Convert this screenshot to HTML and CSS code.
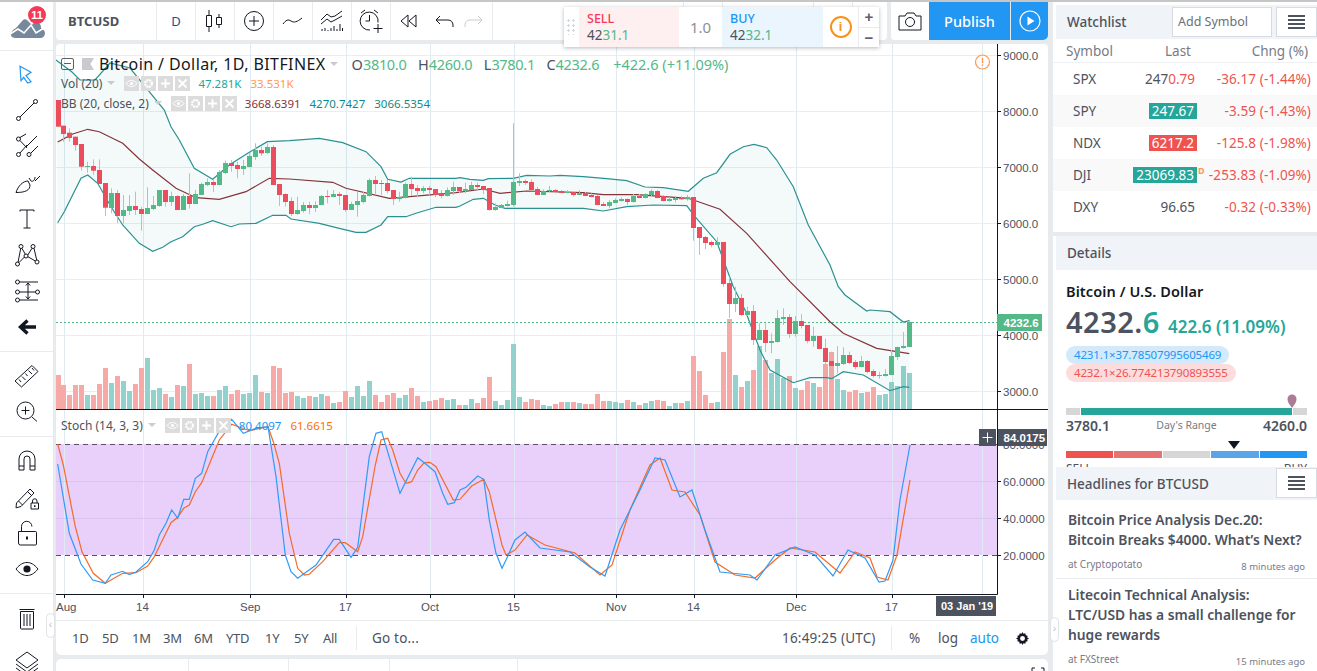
FILE: index.html
```html
<!DOCTYPE html>
<html lang="en">
<head>
<meta charset="utf-8">
<title>BTCUSD chart</title>
<link rel="stylesheet" href="styles.css">
</head>
<body>
<div class="app">
  <aside class="sidebar">
    <div class="logo">
      <svg class="logo-mark" width="36" height="26" viewBox="0 0 36 26"><path class="logo-cloud" d="M2 20c0-4 3-6 5-7l7-8c1-1 3-1 4 0l5 5c2-3 6-3 8-1 1 2 1 3 1 4 2 1 4 3 4 5 0 3-2 5-5 5H7c-3 0-5-1-5-3z"/><path class="logo-line" d="M1 19l8-5 6 4 7-8 5 8 8-5"/></svg>
      <span class="badge">11</span>
    </div>
    <div class="tools">
      <div class="tool"><svg viewBox="0 0 28 28"><path class="i-blue" d="M7 5.300L18 11.300L13 14.700L18 20.700L14.700 22L10.700 16.300L8 19.700Z"/></svg></div>
      <div class="tool"><svg viewBox="0 0 28 28"><circle class="i" cx="5.500" cy="21.500" r="2"/><circle class="i" cx="22.500" cy="4.500" r="2"/><path class="i" d="M7 20L21 6"/></svg></div>
      <div class="tool"><svg viewBox="0 0 28 28"><circle class="i" cx="5.500" cy="6" r="2"/><circle class="i" cx="5.500" cy="21.500" r="2"/><circle class="i" cx="16" cy="21.500" r="2"/><path class="i" d="M7 4.500L13 1M7 7.500L14 15M14 12L7 20M13 14L24 3M18 20L25 13"/></svg></div>
      <div class="tool"><svg viewBox="0 0 28 28"><path class="i" d="M3 23.500C5 17 10 12 15 12L17 16C17 21 13 23.500 3 23.500ZM16 9L18 12C20 13 22 11 22 8M22 12L27 7"/></svg></div>
      <div class="tool"><svg viewBox="0 0 28 28"><path class="i" d="M7 6.500V5h14v1.500M14 5v18M10.500 23h7"/></svg></div>
      <div class="tool"><svg viewBox="0 0 28 28"><circle class="i" cx="4.500" cy="23" r="2"/><circle class="i" cx="8" cy="5.500" r="2"/><circle class="i" cx="13" cy="15" r="2"/><circle class="i" cx="20" cy="5.500" r="2"/><circle class="i" cx="24" cy="21" r="2"/><path class="i" d="M5 21.500L7.700 7.500M6 21.500L11.500 16M8.900 7.300L12.300 13.200M14.800 14L19 7.300M21 7.300L23.700 19M14.900 15.700L22.300 20"/></svg></div>
      <div class="tool"><svg viewBox="0 0 28 28"><circle class="i" cx="4.500" cy="5" r="2"/><circle class="i" cx="4.500" cy="15" r="2"/><circle class="i" cx="4.500" cy="23" r="2"/><circle class="i" cx="24.500" cy="15" r="2"/><path class="i" d="M6.500 5H25M6.500 15h16M6.500 23H25M15 6v16M12.800 8.500L15 6l2.200 2.500M12.800 19.500L15 22l2.200-2.500"/></svg></div>
      <div class="tool"><svg viewBox="0 0 28 28"><path class="i-bold" d="M23 14H8M14.500 7.500L7.500 14l7 6.500"/></svg></div>
    </div>
    <div class="tools">
      <div class="tool"><svg viewBox="0 0 28 28"><path class="i" d="M2 19L19 3.500L25 9.500L8.500 25ZM6 17.500L8 20M9 14.500L12.500 18M12.500 11.500L14.500 14M15.500 8.500L19 12M19 6L21 8.500"/></svg></div>
      <div class="tool"><svg viewBox="0 0 28 28"><circle class="i" cx="12.500" cy="12.500" r="8.500"/><path class="i" d="M12.500 8.500v8M8.500 12.500h8M19 19l5 4.500"/></svg></div>
    </div>
    <div class="tools tools-tall">
      <div class="tool"><svg viewBox="0 0 28 28"><path class="i" d="M6 23V12a8 8 0 0 1 16 0v11h-5V12a3 3 0 0 0-6 0v11ZM6 19h5M17 19h5"/></svg></div>
      <div class="tool"><svg viewBox="0 0 28 28"><path class="i" d="M3.500 20L17 6l4 4L8 23.500l-5 1.300ZM14.500 8.500l4 4M5.500 18l4 4M18 20h7.500v6H18ZM19.500 20v-2a2.200 2.200 0 0 1 4.500 0v2"/><path class="i-dot" d="M21 22.300h1.500v1.800H21z"/></svg></div>
      <div class="tool"><svg viewBox="0 0 28 28"><path class="i" d="M5.500 12.500h17a1 1 0 0 1 1 1V25a1 1 0 0 1-1 1h-15a2 2 0 0 1-2-2ZM8.500 12V7.500a5.200 5.200 0 0 1 10.400 0"/><path class="i-dot" d="M13 17.500h2V20.500h-2z"/></svg></div>
      <div class="tool"><svg viewBox="0 0 28 28"><path class="i" d="M3 14C7 9 10.500 7.500 14 7.500S21 9 25 14c-4 5-7.500 6.500-11 6.500S7 19 3 14Z"/><circle class="i-dot" cx="14" cy="14" r="3.600"/></svg></div>
    </div>
    <div class="tools tools-end">
      <div class="tool"><svg viewBox="0 0 28 28"><path class="i" d="M7.500 7.500h13V24a1 1 0 0 1-1 1h-11a1 1 0 0 1-1-1ZM6.500 5.500H21.500M11 10v12M14 10v12M17 10v12"/></svg></div>
      <div class="tool tool-low"><svg viewBox="0 0 28 28"><path class="i" d="M14 2l11 8-11 8L3 10ZM3 14l11 8 11-8M3 18l11 8 11-8"/></svg></div>
    </div>
  </aside>

  <main class="center">
    <header class="topbar">
      <div class="seg seg-sym"><span class="sym">BTCUSD</span></div>
      <div class="seg seg-btn"><span class="interval">D</span></div>
      <div class="seg seg-btn"><svg class="icon" viewBox="0 0 28 28"><path class="i" d="M8 3v22M18 7v14"/><path class="i-fill" d="M5.500 8.500h5v11h-5zM15.500 10.500h5v7h-5z"/></svg></div>
      <div class="seg seg-btn"><svg class="icon" viewBox="0 0 28 28"><circle class="i" cx="14" cy="14" r="9.500"/><path class="i" d="M14 9v10M9 14h10"/></svg></div>
      <div class="seg seg-btn"><svg class="icon" viewBox="0 0 28 28"><path class="i" d="M4 17c3-4 5-5 8-3s6 1 11-3"/></svg></div>
      <div class="seg seg-btn"><svg class="icon" viewBox="0 0 28 28"><path class="i" d="M3 13l6-6 4 3 4-1 7-5M3 17l6-5 4 3 4-2 7-4M4 24v-2M7 24v-3M10 24v-1M13 24v-3M16 24v-5M19 24v-2M22 24v-7M24.500 24v-3"/></svg></div>
      <div class="seg seg-btn"><svg class="icon" viewBox="0 0 28 28"><path class="i" d="M21 15.500A9 9 0 1 0 13 23M12.500 8v6h-4M4 6l4-3M21 6l-4-3M21 17v9M16.500 21.500h9"/></svg></div>
      <div class="seg seg-hist">
        <svg class="icon" viewBox="0 0 28 28"><path class="i" d="M13 8v12l-7-6ZM21 8v12l-7-6Z"/></svg>
        <svg class="icon icon-undo" viewBox="0 0 28 28"><path class="i" d="M9 9l-4 4 4 4M5 13h12c3 0 5 2 5 5v2"/></svg>
        <svg class="icon" viewBox="0 0 28 28"><path class="i-mute" d="M19 9l4 4-4 4M23 13H11c-3 0-5 2-5 5v2"/></svg>
      </div>
      <div class="seg seg-a"></div>
      <div class="seg seg-btn"></div>
      <div class="seg seg-b"></div>
      <div class="seg seg-btn"></div>
      <div class="seg seg-c"></div>
      <div class="seg seg-btn seg-cam"><svg class="icon" viewBox="0 0 28 28"><path class="i" d="M3 9h6l2-3h7l2 3h5v14H3Z"/><circle class="i" cx="14" cy="15" r="4.500"/></svg></div>
      <div class="publish">Publish</div>
      <div class="play"><svg width="24" height="24" viewBox="0 0 24 24"><circle class="play-ring" cx="12" cy="12" r="10"/><path class="play-tri" d="M9.500 7.500l7 4.500-7 4.500Z"/></svg></div>
    </header>

    <section class="chart">
      <svg id="plot" class="plot" viewBox="56 44 992 576" width="992" height="576">
        <defs>
          <clipPath id="clip-main"><rect x="56" y="44" width="941" height="365"/></clipPath>
          <clipPath id="clip-stoch"><rect x="56" y="410" width="941" height="184"/></clipPath>
          <symbol id="a-eye" viewBox="0 0 15 15"><path class="act-l" d="M2 7.500C4 5 6 4.500 7.500 4.500S11 5 13 7.500C11 10 9 10.500 7.500 10.500S4 10 2 7.500Z"/><circle class="act-f" cx="7.500" cy="7.500" r="1.600"/></symbol>
          <symbol id="a-gear" viewBox="0 0 15 15"><circle class="act-g" cx="7.500" cy="7.500" r="3.400"/></symbol>
          <symbol id="a-plus" viewBox="0 0 15 15"><path class="act-b" d="M7.500 3v9M3 7.500h9"/></symbol>
          <symbol id="a-x" viewBox="0 0 15 15"><path class="act-b" d="M3.500 3.500l8 8M11.500 3.500l-8 8"/></symbol>
        </defs>
        <g id="grid"></g>
        <g id="series"></g>
        <path class="axis" d="M997.500 44V594.500M56 409.500H1048M56 594.500H997.500"/>
        <path id="ticks" class="axis"/>
        <g class="ylab">
          <text x="1003" y="60">9000.0</text>
          <text x="1003" y="116">8000.0</text>
          <text x="1003" y="172">7000.0</text>
          <text x="1003" y="228">6000.0</text>
          <text x="1003" y="284">5000.0</text>
          <text x="1003" y="340">4000.0</text>
          <text x="1003" y="396">3000.0</text>
          <text x="1003" y="449">80.0000</text>
          <text x="1003" y="486">60.0000</text>
          <text x="1003" y="523">40.0000</text>
          <text x="1003" y="560">20.0000</text>
        </g>
        <rect class="last-box" x="997" y="314" width="45" height="17"/>
        <text class="last-text" x="1003.500" y="326.500">4232.6</text>
        <rect class="cross-box" x="979" y="429" width="17" height="17"/>
        <path class="cross-plus" d="M987.500 432.500v10M982.500 437.500h10"/>
        <rect class="cross-box" x="998" y="429" width="49" height="17"/>
        <text class="last-text" x="1003.500" y="441.500">84.0175</text>
        <g class="xlab">
          <text x="56" y="611">Aug</text>
          <text x="136" y="611">14</text>
          <text x="240" y="611">Sep</text>
          <text x="339" y="611">17</text>
          <text x="421" y="611">Oct</text>
          <text x="507" y="611">15</text>
          <text x="606" y="611">Nov</text>
          <text x="687" y="611">14</text>
          <text x="786" y="611">Dec</text>
          <text x="885" y="611">17</text>
        </g>
        <rect class="cross-box" x="936" y="596" width="60" height="20"/>
        <text class="date-text" x="941" y="610">03 Jan '19</text>
        <g class="warn"><circle cx="982.500" cy="62" r="7"/><path d="M982.500 58v5M982.500 64.500v1.500"/></g>
      </svg>

      <div class="legend">
        <div class="legend-main">
          <span class="collapse"></span>
          <span class="flag"></span>
          <span class="title">Bitcoin / Dollar, 1D, BITFINEX</span>
          <span class="caret"></span>
          <span class="ohlc"><b>O</b><i>3810.0</i></span>
          <span class="ohlc"><b>H</b><i>4260.0</i></span>
          <span class="ohlc"><b>L</b><i>3780.1</i></span>
          <span class="ohlc"><b>C</b><i>4232.6</i></span>
          <span class="ohlc-change">+422.6 (+11.09%)</span>
        </div>
        <div class="legend-row">
          <span class="study">Vol (20)</span><span class="caret caret-s"></span>
          <span class="acts"><svg class="act"><use href="#a-eye"/></svg><svg class="act"><use href="#a-gear"/></svg><svg class="act"><use href="#a-plus"/></svg><svg class="act"><use href="#a-x"/></svg></span>
          <span class="v-green">47.281K</span><span class="v-orange">33.531K</span>
        </div>
        <div class="legend-row">
          <span class="study">BB (20, close, 2)</span><span class="caret caret-s"></span>
          <span class="acts"><svg class="act"><use href="#a-eye"/></svg><svg class="act"><use href="#a-gear"/></svg><svg class="act"><use href="#a-plus"/></svg><svg class="act"><use href="#a-x"/></svg></span>
          <span class="v-maroon">3668.6391</span><span class="v-teal">4270.7427</span><span class="v-teal">3066.5354</span>
        </div>
      </div>
      <div class="legend-stoch">
        <span class="study">Stoch (14, 3, 3)</span><span class="caret caret-s"></span>
        <span class="acts"><svg class="act"><use href="#a-eye"/></svg><svg class="act"><use href="#a-gear"/></svg><svg class="act"><use href="#a-plus"/></svg><svg class="act"><use href="#a-x"/></svg></span>
        <span class="v-blue">80.4097</span><span class="v-deep">61.6615</span>
      </div>
    </section>

    <div class="timebar">
      <div class="ranges"><span class="r30">1D</span><span class="r30">5D</span><span class="r31">1M</span><span class="r31">3M</span><span class="r32">6M</span><span class="r39">YTD</span><span class="r29">1Y</span><span class="r29">5Y</span><span class="r29">All</span></div>
      <div class="goto">Go to...</div>
      <div class="clock">16:49:25 (UTC)</div>
      <div class="scale">
        <span class="s-pct">%</span><span class="s-log">log</span><span class="s-auto">auto</span>
        <svg class="gear" viewBox="0 0 16 16"><path class="gear-p" d="M8 1l1 2 2-.5 .5 2 2 .5-.5 2 2 1-2 1 .5 2-2 .5-.5 2-2-.5-1 2-1-2-2 .5-.5-2-2-.5.5-2-2-1 2-1-.5-2 2-.5.5-2 2 .5Z"/><circle class="gear-h" cx="8" cy="8" r="2.600"/></svg>
      </div>
    </div>

    <div class="lowerbar">
      <div class="low-seg low-a"></div>
      <div class="low-seg low-b"></div>
      <div class="low-seg low-c"></div>
      <div class="low-seg low-d"></div>
      <div class="low-seg low-e"><svg class="expand" width="14" height="6" viewBox="0 0 14 6"><path class="i" d="M1 6V1h3M13 6V1h-3"/></svg></div>
    </div>
  </main>

  <aside class="right">
    <section class="panel watch">
      <div class="panel-head">
        <span class="panel-title">Watchlist</span>
        <span class="addsym">Add Symbol</span>
        <span class="menu"><span class="bars"></span></span>
      </div>
      <div class="wl-cols"><span class="c-sym">Symbol</span><span class="c-last">Last</span><span class="c-chg">Chng (%)</span></div>
      <div class="wl-row"><span class="c-sym">SPX</span><span class="c-last">247<span class="red">0.79</span></span><span class="c-chg">-36.17 (-1.44%)</span></div>
      <div class="wl-row alt"><span class="c-sym">SPY</span><span class="c-last"><span class="flash up">247.67</span></span><span class="c-chg">-3.59 (-1.43%)</span></div>
      <div class="wl-row"><span class="c-sym">NDX</span><span class="c-last"><span class="flash down">6217.2</span></span><span class="c-chg">-125.8 (-1.98%)</span></div>
      <div class="wl-row alt"><span class="c-sym">DJI</span><span class="c-last"><span class="flash up">23069.83</span><sup class="delay">D</sup></span><span class="c-chg">-253.83 (-1.09%)</span></div>
      <div class="wl-row"><span class="c-sym">DXY</span><span class="c-last">96.65</span><span class="c-chg">-0.32 (-0.33%)</span></div>
    </section>

    <section class="panel details">
      <div class="panel-head"><span class="panel-title">Details</span></div>
      <div class="d-body">
        <div class="d-name">Bitcoin / U.S. Dollar</div>
        <div class="d-price"><span class="big">4232.<em>6</em></span><span class="d-chg">422.6 (11.09%)</span></div>
        <div class="pill pill-b">4231.1×37.78507995605469</div>
        <div class="pill pill-r">4232.1×26.774213790893555</div>
        <div class="range">
          <span class="r-side"></span><span class="r-fill"></span><span class="r-side"></span>
          <svg class="pin" width="10" height="14" viewBox="0 0 10 14"><path d="M5 14C2 10 .5 8 .5 5a4.500 4.500 0 0 1 9 0c0 3-1.500 5-4.500 9Z"/></svg>
        </div>
        <div class="r-labels"><b>3780.1</b><span>Day's Range</span><b>4260.0</b></div>
        <div class="rating">
          <span class="rt1"></span><span class="rt2"></span><span class="rt3"></span><span class="rt4"></span><span class="rt5"></span>
          <span class="needle"></span>
        </div>
        <div class="rating-labels"><span>SELL</span><span>BUY</span></div>
      </div>
    </section>

    <section class="panel news">
      <div class="panel-head news-head">
        <span class="panel-title">Headlines for BTCUSD</span>
        <span class="menu news-menu"><span class="bars"></span></span>
      </div>
      <article class="item">
        <h3>Bitcoin Price Analysis Dec.20:<br>Bitcoin Breaks $4000. What’s Next?</h3>
        <div class="meta"><span>at Cryptopotato</span><span class="ago">8 minutes ago</span></div>
      </article>
      <article class="item">
        <h3>Litecoin Technical Analysis:<br>LTC/USD has a small challenge for<br>huge rewards</h3>
        <div class="meta"><span>at FXStreet</span><span class="ago">15 minutes ago</span></div>
      </article>
    </section>
  </aside>

  <div class="trade">
    <div class="grip"></div>
    <div class="side sell"><b>SELL</b><span>42<i>31.1</i></span></div>
    <div class="qty">1.0</div>
    <div class="side buy"><b>BUY</b><span>42<i>32.1</i></span></div>
    <div class="info"><span>i</span></div>
    <div class="steps"><span>+</span><span>−</span></div>
  </div>
  <div class="handle handle-l">‹</div>
  <div class="handle handle-r">›</div>
</div>
<script src="chart.js"></script>
</body>
</html>
```

FILE: styles.css
```css
* { box-sizing: border-box; }
html, body { margin: 0; height: 671px; overflow: hidden; }
body { background: #e8ebee; font-family: "Noto Sans", sans-serif; color: #4c525e; }
.app { position: relative; display: flex; width: 1317px; height: 671px; border-top: 2px solid #c6c6c6; }

/* left tool rail */
.sidebar { width: 53px; height: 669px; background: #fff; overflow: hidden; flex: none; }
.logo { position: relative; height: 49px; border-bottom: 1px solid #e8ebee; }
.logo-mark { position: absolute; left: 9px; top: 13px; }
.logo-cloud { fill: #76889b; }
.logo-line { fill: none; stroke: #fff; stroke-width: 1.6; }
.badge { position: absolute; left: 28px; top: 4px; width: 18px; height: 18px; border-radius: 9px; background: #f6395a; color: #fff; font: bold 11px/18px "Liberation Sans", sans-serif; text-align: center; }
.tools { padding: 6px 0; border-bottom: 1px solid #e8ebee; }
.tools-tall { padding: 6px 0; }
.tools-end { border-bottom: 0; }
.tool { height: 36px; display: flex; align-items: center; justify-content: center; }
.tool svg { width: 28px; height: 28px; }
.tool-low { margin-top: 10px; }
.i { fill: none; stroke: #131722; stroke-width: 1; }
.i-blue { fill: none; stroke: #2196f3; stroke-width: 1.2; }
.i-bold { fill: none; stroke: #131722; stroke-width: 3.4; }
.i-dot { fill: #131722; }
.i-fill { fill: #fff; stroke: #131722; stroke-width: 1; }
.i-mute { fill: none; stroke: #c8ccd2; stroke-width: 1; }

/* center column */
.center { width: 992px; margin-left: 3px; flex: none; display: flex; flex-direction: column; }
.topbar { display: flex; height: 38px; gap: 1px; flex: none; }
.seg { background: #fff; height: 38px; display: flex; align-items: center; justify-content: center; flex: none; }
.seg-sym { width: 100px; justify-content: flex-start; padding-left: 12px; border-bottom-left-radius: 4px; }
.sym { font-size: 13px; font-weight: 700; color: #4c525e; letter-spacing: .1px; }
.seg-btn { width: 38px; }
.interval { font-size: 13px; color: #1f4f8c; }
.icon { width: 28px; height: 28px; flex: none; }
.seg-hist { width: 101px; justify-content: flex-start; padding-left: 4px; }
.icon-undo { margin-left: 8px; }
.seg-a { width: 190px; }
.seg-b { width: 90px; }
.seg-c { width: 34px; margin-right: 3px; border-bottom-right-radius: 4px; }
.seg-cam { border-bottom-left-radius: 4px; margin-right: -1px; }
.publish { width: 81px; height: 38px; background: #2196f3; color: #fff; font-size: 14.500px; font-weight: 500; display: flex; align-items: center; justify-content: center; flex: none; }
.play { width: 37px; height: 38px; background: #2196f3; display: flex; align-items: center; justify-content: center; border-bottom-right-radius: 5px; flex: none; }
.play-ring { fill: none; stroke: #fff; stroke-width: 1.2; }
.play-tri { fill: #fff; }

.chart { position: relative; margin-top: 4px; height: 576px; flex: none; background: #fff; border-radius: 4px 4px 0 0; overflow: hidden; }
.plot { display: block; }
.axis { fill: none; stroke: #131722; stroke-width: 1; }
.ylab text { font: 11.500px "Liberation Sans", sans-serif; fill: #4c525e; }
.xlab text { font: 11.500px "Liberation Sans", sans-serif; fill: #4c525e; }
.last-box { fill: #53b987; }
.cross-box { fill: #4c525e; }
.last-text { font: bold 11.500px "Liberation Sans", sans-serif; fill: #fff; }
.date-text { font: bold 11px "Liberation Sans", sans-serif; fill: #fff; }
.cross-plus { stroke: #fff; stroke-width: 1; }
.warn circle { fill: none; stroke: #ff9850; stroke-width: 1.2; }
.warn path { stroke: #ff9850; stroke-width: 1.4; }
.grid-h { stroke: #e8eef2; stroke-width: 1; }
.grid-v { stroke: #dfeaf2; stroke-width: 1; }
.band-fill { fill: #26a69a; fill-opacity: .055; }
.band { fill: none; stroke: #2a9192; stroke-width: 1.2; }
.mid { fill: none; stroke: #85343c; stroke-width: 1.2; }
.st-fill { fill: #e8d0fb; }
.st-grid { stroke: #d9c4f2; stroke-width: 1; }
.st-dash { stroke: #5b4f66; stroke-width: 1; stroke-dasharray: 5 4; }
.st-blue { fill: none; stroke: #2f9bf5; stroke-width: 1.2; }
.st-orange { fill: none; stroke: #f56a28; stroke-width: 1.2; }
.last-line { stroke: #53b987; stroke-width: 1; stroke-dasharray: 2 2; }
.vol-r { fill: #f7a9a7; }
.vol-g { fill: #93d2cc; }
.can-r { fill: #eb4d5c; }
.can-g { fill: #53b987; }
.wick-r { fill: #f2a7ad; }
.wick-g { fill: #a4c9b8; }

/* legends over the plot */
.legend { position: absolute; left: 5px; top: 8px; }
.legend-main { display: flex; align-items: center; height: 24px; font-size: 16px; color: #131722; margin-bottom: -3px; }
.collapse { width: 13px; height: 12px; border: 1px solid #5d606b; border-radius: 2px; position: relative; }
.collapse::after { content: ""; position: absolute; left: 2px; right: 2px; top: 4px; height: 1px; background: #5d606b; }
.flag { width: 12px; height: 12px; margin-left: 8px; background: #c9c9cf; clip-path: polygon(0 0, 100% 0, 70% 50%, 100% 100%, 0 100%); }
.title { margin-left: 5px; white-space: nowrap; letter-spacing: .4px; }
.caret { width: 0; height: 0; border: 4px solid transparent; border-top-color: #c9cbd0; border-bottom-width: 0; margin-left: 4px; }
.caret-s { margin-left: 5px; }
.ohlc { white-space: nowrap; font-size: 14.500px; }
.ohlc b { font-weight: 400; margin-left: 11.500px; color: #4c525e; }
.ohlc i { font-style: normal; color: #53b987; letter-spacing: -.3px; }
.caret + .ohlc b { margin-left: 14px; }
.ohlc-change { margin-left: 14px; font-size: 14.500px; color: #53b987; white-space: nowrap; }
.legend-row { display: flex; align-items: center; height: 20px; font-size: 12px; white-space: nowrap; }
.study { color: #4c525e; }
.acts { display: flex; gap: 2px; margin-left: 9px; margin-right: 8px; }
.act { width: 15px; height: 15px; background: #dcdcdc; }
.act-l { fill: none; stroke: #fff; stroke-width: 1; }
.act-f { fill: #fff; }
.act-g { fill: none; stroke: #fff; stroke-width: 2.200; stroke-dasharray: 2 .7; }
.act-b { fill: none; stroke: #fff; stroke-width: 1.800; }
.v-green { color: #26a69a; margin-right: 9px; font-size: 11.500px; }
.v-orange { color: #ff9850; font-size: 11.500px; }
.v-maroon { color: #8b2f38; margin-right: 9px; font-size: 11.500px; }
.v-teal { color: #0f8a8a; margin-right: 9px; font-size: 11.500px; }
.v-blue { color: #2196f3; margin-right: 9px; font-size: 11.500px; }
.v-deep { color: #ff6d00; font-size: 11.500px; }
.legend-stoch { position: absolute; left: 5px; top: 371px; height: 20px; display: flex; align-items: center; font-size: 12px; white-space: nowrap; }
.legend-stoch .acts { margin-left: 9px; margin-right: 8px; }

/* range bar */
.timebar { display: flex; align-items: center; height: 35px; background: #fff; flex: none; border-top: 1px solid #e8ebee; border-radius: 0 0 5px 5px; font-size: 13.500px; color: #4c525e; }
.ranges { display: flex; padding-left: 16px; width: 301px; height: 24px; align-items: center; border-right: 1px solid #e8ebee; font-size: 13px; letter-spacing: -.3px; white-space: nowrap; }
.r29 { width: 29px; }
.r30 { width: 30px; }
.r31 { width: 31px; }
.r32 { width: 32px; }
.r39 { width: 39px; }
.goto { padding-left: 15px; width: 425px; letter-spacing: .2px; }
.clock { width: 110px; height: 24px; line-height: 24px; border-right: 1px solid #e8ebee; letter-spacing: .2px; }
.scale { display: flex; align-items: center; padding-left: 17px; }
.s-pct { width: 29px; }
.s-log { width: 32px; }
.s-auto { width: 45px; color: #2196f3; }
.gear { width: 15px; height: 15px; }
.gear-p { fill: #131722; }
.gear-h { fill: #fff; }

.lowerbar { display: flex; gap: 1px; margin-top: 4px; flex: 1; }
.low-seg { background: #fff; height: 20px; }
.low-a { width: 132px; border-top-left-radius: 5px; }
.low-b { width: 99px; }
.low-c { width: 100px; }
.low-d { width: 127px; }
.low-e { flex: 1; border-top-right-radius: 5px; position: relative; }
.expand { position: absolute; right: 3px; top: 8px; }

/* right column */
.right { width: 264px; margin-left: 5px; flex: none; display: flex; flex-direction: column; }
.panel { background: #fff; }
.panel-head { margin-left: 3px; height: 34px; background: #f0f3f8; display: flex; align-items: center; position: relative; }
.panel-title { margin-left: 11px; font-size: 13.500px; font-weight: 500; color: #4c525e; }
.watch { height: 230px; padding-top: 3px; }
.addsym { position: absolute; left: 116px; top: 2px; width: 100px; height: 30px; background: #fff; border: 1px solid #d8dce2; font-size: 12.500px; line-height: 28px; padding-left: 5px; color: #6a6f7a; }
.menu { position: absolute; left: 220px; top: 2px; width: 41px; height: 30px; background: #fff; border: 1px solid #d8dce2; display: flex; align-items: center; justify-content: center; }
.bars { width: 17px; height: 14px; background: repeating-linear-gradient(#4c525e 0 2px, transparent 2px 4px); }
.wl-cols { display: flex; height: 24px; align-items: center; font-size: 13.500px; color: #787b86; border-bottom: 1px solid #eef0f3; }
.wl-cols .c-sym { margin-left: 13px; width: 60px; }
.wl-cols .c-last { width: 65px; text-align: right; }
.wl-cols .c-chg { width: 117px; text-align: right; }
.wl-row { display: flex; height: 32px; align-items: center; font-size: 13.500px; color: #4c525e; white-space: nowrap; }
.wl-row.alt { background: #f9f9fa; }
.wl-row .c-sym { margin-left: 20px; width: 40px; }
.wl-row .c-last { width: 82px; text-align: right; position: relative; }
.wl-row .c-chg { width: 116px; text-align: right; color: #ef5350; letter-spacing: .1px; }
.red { color: #ef5350; }
.flash { display: inline-block; color: #fff; padding: 0 3px; line-height: 16px; margin-right: -2px; }
.up { background: #26a69a; }
.down { background: #ef5350; }
.delay { position: absolute; left: 100%; top: 0; margin-left: 3px; font-size: 9px; color: #ff9850; font-weight: 700; line-height: 10px; }

.details { margin-top: 4px; height: 231px; overflow: hidden; }
.d-body { padding: 11px 10px 0 13px; }
.d-name { font-size: 14.500px; font-weight: 600; color: #131722; line-height: 20px; letter-spacing: .1px; }
.d-price { display: flex; align-items: baseline; height: 36px; margin-top: 3px; white-space: nowrap; }
.big { font-size: 29px; font-weight: 600; line-height: 36px; color: #4c525e; letter-spacing: .5px; }
.big em { font-style: normal; color: #26a69a; }
.d-chg { margin-left: 8px; font-size: 17px; font-weight: 600; color: #26a69a; }
.pill { display: table; height: 18px; line-height: 18px; margin: 0; padding: 0 8px; border-radius: 9px; font-size: 11.500px; letter-spacing: -.15px; white-space: nowrap; }
.pill-b { margin-top: 6px; background: #d3e9fc; color: #2196f3; }
.pill-r { background: #fcdcdc; color: #ef5350; }
.range { position: relative; display: flex; gap: 1px; margin-top: 26px; height: 7px; width: 241px; }
.r-side { width: 14px; background: #d6d6d6; }
.r-fill { flex: 1; background: #26a69a; }
.pin { position: absolute; left: 221px; top: -14px; }
.pin path { fill: #ad7b96; }
.r-labels { display: flex; justify-content: space-between; align-items: center; width: 241px; height: 20px; font-size: 13px; color: #4c525e; }
.r-labels b { font-weight: 600; font-size: 14px; }
.r-labels span { font-size: 10.500px; color: #787b86; }
.rating { position: relative; display: flex; gap: 1px; margin-top: 16px; height: 7px; width: 241px; }
.rating span { flex: 1; }
.rt1 { background: #ef5350; }
.rt2 { background: #e57373; }
.rt3 { background: #d6d6d6; }
.rt4 { background: #5aa5e8; }
.rt5 { background: #2196f3; }
.rating .needle { position: absolute; flex: none; left: 162px; top: -10px; width: 0; height: 0; border: 6px solid transparent; border-top: 8px solid #131722; border-bottom: 0; }
.rating-labels { display: flex; justify-content: space-between; width: 241px; margin-top: 3px; font-size: 12px; line-height: 16px; color: #4c525e; }

.news { flex: 1; overflow: hidden; }
.news-head { height: 33px; }
.news-menu { top: 1px; height: 30px; }
.item { margin-left: 3px; padding: 10px 8px 0 12px; border-bottom: 1px solid #e8ebee; }
.item + .item { padding-top: 6px; border-bottom: 0; }
.item h3 { margin: 0; font-size: 13.800px; line-height: 20px; font-weight: 600; color: #4c525e; white-space: nowrap; }
.meta { display: flex; justify-content: space-between; height: 28px; align-items: center; font-size: 10px; color: #787b86; padding-right: 4px; }
.ago { position: relative; top: 2px; font-size: 9.500px; }

/* floating overlays */
.trade { position: absolute; left: 564px; top: 5px; width: 315px; height: 40px; display: flex; background: #fff; box-shadow: 0 1px 4px rgba(70, 80, 100, .4); }
.grip { width: 15px; background: radial-gradient(circle, #d4d8dd 1px, transparent 1.300px) 2px 6px / 5px 5px; background-clip: content-box; padding: 12px 2px; }
.side { width: 100px; padding: 3px 0 0 8px; display: flex; flex-direction: column; font-size: 13.500px; line-height: 17px; }
.side b { font-weight: 500; font-size: 12.500px; }
.side i { font-style: normal; color: #53b987; }
.sell { background: #fef0f1; }
.sell b { color: #f6395a; }
.buy { background: #eaf5fe; width: 101px; }
.buy b { color: #2196f3; }
.qty { width: 43px; display: flex; align-items: center; justify-content: center; font-size: 15px; color: #8b8f98; }
.info { width: 35px; display: flex; align-items: center; justify-content: center; }
.info span { width: 22px; height: 22px; border: 2px solid #f7931a; border-radius: 50%; color: #f7931a; font: bold 13px/18px "Liberation Sans", sans-serif; text-align: center; }
.steps { flex: 1; display: flex; flex-direction: column; border-left: 1px solid #e8ebee; }
.steps span { flex: 1; display: flex; align-items: center; justify-content: center; font: bold 15px/1 "Liberation Sans", sans-serif; color: #5d606b; }
.steps span + span { border-top: 1px solid #e8ebee; }
.handle { position: absolute; width: 9px; height: 25px; background: #fff; border: 1px solid #dfe2e6; border-radius: 5px; font: 10px/22px "Liberation Sans", sans-serif; text-align: center; color: #b8bcc4; }
.handle-l { left: 46px; top: 611px; }
.handle-r { left: 1050px; top: 615px; }
```

FILE: chart.js
```js
(function () {
  var SVG = document.getElementById('series');
  var GRID = document.getElementById('grid');

  // Candle rows: colour, body top, body bottom, wick top, wick bottom (chart units: y = 110 + v / 3)
  var candles = ('r-30,50,-30,50 r47,72,47,95 r68,84,55,95 r80,105,80,122 r102,170,102,182 g168,171,155,188 ' +
    'r168,182,148,195 r180,222,148,222 r219,293,219,318 g249,294,235,310 r249,318,240,340 g300,318,255,340 ' +
    'g288,303,255,315 r288,300,245,315 r297,312,290,362 g294,312,232,312 g285,297,258,300 g240,288,240,290 ' +
    'r240,276,240,290 g258,276,245,288 r258,300,255,300 g258,300,252,300 r258,282,190,296 g252,282,240,282 ' +
    'g222,255,218,255 g216,225,205,228 r216,225,208,246 g186,225,180,226 g159,189,152,192 r159,168,150,185 ' +
    'r165,177,155,205 g168,177,150,195 g138,171,130,172 g120,141,100,150 r120,130,110,138 g111,129,100,132 ' +
    'r111,225,105,225 r222,255,222,288 r252,276,250,290 r273,312,262,318 g300,312,260,315 g285,303,276,308 ' +
    'r285,294,275,312 g285,294,274,306 g258,285,255,285 r258,261,240,280 g252,261,240,262 r252,258,246,285 ' +
    'r255,300,255,305 g282,300,275,300 g273,285,245,320 g255,276,245,280 g210,258,205,260 r210,222,198,255 ' +
    'r219,222,210,255 r219,243,210,250 r240,267,240,285 g261,267,245,275 g222,264,218,265 r222,237,200,258 ' +
    'r234,243,225,262 g234,243,228,250 r234,240,228,255 r237,255,237,262 r249,258,240,265 g240,258,232,260 ' +
    'g231,243,215,255 r231,243,231,250 g237,244,218,250 g225,240,215,240 r225,231,218,240 r228,240,228,252 ' +
    'r234,300,234,302 g291,300,280,302 g285,294,282,295 g282,288,272,290 g216,285,40,290 g213,219,190,228 ' +
    'r213,219,208,225 r216,240,208,240 r237,255,230,255 g243,255,238,255 g240,243,228,245 r240,246,238,250 ' +
    'r243,249,240,250 g246,248,240,250 r246,255,245,260 g249,255,240,255 r249,258,245,258 r255,261,250,262 ' +
    'r258,285,255,285 r282,288,276,288 g276,288,270,295 g270,279,265,280 g267,273,262,275 r267,276,265,285 ' +
    'g258,276,252,278 r258,264,252,265 g252,264,250,265 g243,255,238,258 r243,264,240,265 r258,273,256,274 ' +
    'g267,273,262,275 g264,270,258,278 r264,268,258,270 g261,268,255,272 r261,354,261,392 r351,384,351,435 ' +
    'r381,399,378,417 r396,405,392,412 g396,405,382,408 r396,522,396,530 r519,582,500,624 g564,582,530,606 ' +
    'r564,615,552,618 g603,615,590,618 r603,690,585,705 g660,690,640,690 r660,699,640,726 g693,699,670,730 ' +
    'g624,696,600,698 g621,627,595,645 r621,672,612,684 g633,672,618,680 r633,648,612,655 r645,693,645,700 ' +
    'g678,693,650,710 r678,717,678,717 r714,756,686,765 r753,768,725,785 g759,768,708,790 g735,762,712,765 ' +
    'r735,759,725,762 r756,771,750,778 g753,771,738,772 r753,786,750,790 r783,798,778,803 g795,798,785,806 ' +
    'g792,798,778,800 g738,795,720,796 g711,741,710,750 g708,714,666,716 g636,711,630,711').split(' ');

  var volumes = ('r795 r825 r855 r825 r825 g855 r855 r822 r774 g819 r798 g813 g843 r822 r774 g744 g840 g834 r852 g861 ' +
    'r825 g828 r762 g852 g849 g858 r858 g840 g828 r852 r840 g852 g849 g795 r846 g849 r768 r774 r849 r846 g858 g864 ' +
    'r858 g861 g852 r858 g879 r876 r843 g861 g828 g858 g813 r855 r876 r855 r849 g864 g855 r834 r858 g876 r873 r870 ' +
    'r864 g870 g867 r885 g885 g867 r879 r864 r801 g873 g885 g870 g702 g861 r876 r867 r870 g885 g888 r882 r876 g876 ' +
    'r876 g879 r882 r882 r852 r873 g873 g876 g879 r870 g876 r885 g879 g873 r870 r873 g888 g879 r879 g873 r738 r783 ' +
    'r855 r879 g876 r726 r627 g795 r831 g813 r780 g708 r750 g789 g747 g804 r798 g834 r840 r813 g819 r831 r762 r726 ' +
    'g807 g840 r846 r840 g849 r846 r831 g855 g852 g816 g828 g768 g789').split(' ');

  // Traced indicator lines, in page pixels.
  function t(originX, originY, pts) {
    return pts.map(function (p) { return [originX + p[0] / 3, originY + p[1] / 3]; });
  }
  var upper = [[56, 60], [72, 72], [80, 80], [95, 80], [110, 63], [130, 68]]
    .concat(t(56, 110, [[325, 0], [345, 50], [370, 90], [415, 175], [470, 208], [520, 165], [575, 130], [634, 95], [700, 92], [790, 85], [860, 98], [930, 125], [975, 170], [995, 208], [1035, 216], [1060, 205], [1200, 205]]))
    .concat(t(450, 110, [[30, 203], [60, 208], [100, 211], [115, 206], [190, 205], [230, 196], [300, 198], [330, 196], [400, 200], [470, 206], [530, 212], [585, 231], [640, 233], [715, 244], [760, 205], [800, 188], [840, 133], [880, 110], [912, 103], [950, 113], [980, 150], [1030, 230], [1075, 345], [1140, 465], [1165, 530], [1185, 555], [1250, 603], [1260, 600], [1320, 605], [1360, 636], [1378, 632]]));
  var lower = t(56, 110, [[5, 338], [25, 305], [75, 205], [95, 195], [125, 220], [165, 290], [200, 345], [250, 400], [290, 424], [320, 412], [345, 395], [380, 380], [415, 350], [440, 343], [470, 332], [525, 350], [550, 342], [600, 340], [650, 316], [690, 316], [705, 327], [790, 340], [850, 355], [900, 367], [930, 367], [975, 345], [995, 320], [1050, 320], [1080, 310], [1140, 292], [1200, 292]])
    .concat(t(450, 110, [[30, 288], [70, 268], [100, 265], [135, 285], [165, 295], [400, 295], [460, 303], [530, 290], [610, 285], [710, 287], [735, 320], [800, 395], [850, 530], [885, 600], [930, 720], [960, 780], [1030, 818], [1080, 803], [1130, 803], [1145, 806], [1180, 785], [1240, 795], [1320, 842], [1360, 830], [1378, 832]]));
  var middle = t(56, 110, [[5, 96], [50, 72], [95, 58], [130, 65], [200, 100], [250, 147], [290, 180], [360, 235], [420, 263], [490, 268], [570, 245], [640, 205], [700, 207], [830, 217], [870, 235], [1000, 265], [1200, 248]])
    .concat(t(450, 110, [[100, 237], [150, 250], [230, 243], [400, 248], [460, 254], [560, 254], [715, 265], [810, 298], [890, 370], [1020, 515], [1140, 635], [1180, 670], [1280, 715], [1378, 731]]));
  var blue = t(56, 410, [[5, 162], [40, 370], [75, 462], [110, 510], [148, 520], [165, 495], [200, 484], [220, 494], [240, 486], [275, 455], [295, 420], [310, 375], [330, 340], [347, 300], [365, 325], [383, 268], [400, 268], [418, 205], [437, 190], [455, 125], [492, 60], [527, 28], [562, 70], [600, 55], [636, 50], [660, 200], [688, 435], [705, 485], [725, 505], [780, 465], [833, 388], [850, 388], [885, 442], [905, 412], [940, 140], [960, 70], [977, 65], [1032, 250], [1085, 143], [1105, 158], [1137, 185], [1160, 250], [1175, 283], [1195, 278], [1212, 240], [1230, 232], [1265, 198], [1283, 208], [1300, 330], [1320, 430], [1338, 475], [1350, 450]])
    .concat([[515, 540], [525, 532], [540, 548], [570, 552], [590, 567], [605, 576], [620, 530], [640, 490], [655, 458], [665, 460], [680, 497], [692, 490], [705, 530], [720, 572], [750, 575], [757, 580], [775, 555], [795, 547], [815, 555], [833, 576], [848, 550], [865, 558], [879, 582], [885, 581], [893, 560], [900, 500], [910, 445]]);
  var orange = t(56, 410, [[5, 102], [22, 165], [58, 350], [78, 425], [112, 490], [148, 520], [200, 490], [240, 488], [275, 468], [295, 440], [345, 338], [365, 322], [383, 295], [400, 285], [418, 245], [437, 218], [490, 90], [527, 43], [580, 62], [636, 50], [652, 95], [670, 160], [700, 370], [725, 475], [745, 495], [760, 493], [800, 455], [850, 398], [868, 398], [905, 425], [920, 380], [958, 165], [975, 90], [995, 85], [1010, 120], [1032, 190], [1050, 220], [1067, 215], [1085, 180], [1105, 158], [1122, 157], [1140, 170], [1192, 270], [1212, 268], [1247, 228], [1283, 208], [1300, 245], [1338, 405], [1350, 435]])
    .concat([[515, 550], [527, 535], [545, 545], [575, 553], [600, 575], [612, 565], [630, 510], [650, 465], [660, 458], [672, 490], [685, 492], [700, 515], [715, 562], [735, 575], [755, 578], [775, 560], [790, 548], [815, 552], [840, 573], [855, 552], [870, 558], [877, 577], [888, 580], [897, 555], [910, 480]]);

  function pts(a) { return a.map(function (p) { return p[0].toFixed(1) + ',' + p[1].toFixed(1); }).join(' '); }
  function line(cls, x1, y1, x2, y2) { return '<line class="' + cls + '" x1="' + x1 + '" y1="' + y1 + '" x2="' + x2 + '" y2="' + y2 + '"/>'; }
  function rect(cls, x, y, w, h) { return '<rect class="' + cls + '" x="' + x + '" y="' + y.toFixed(1) + '" width="' + w + '" height="' + Math.max(h, 1).toFixed(1) + '"/>'; }

  var verticals = [64.5, 143.5, 250.5, 346.5, 430.5, 514.5, 616.5, 694.5, 796.5, 892.5, 982.5];
  var rows = [55.5, 111.5, 167.5, 223.5, 279.5, 335.5, 391.5];
  var g = '<rect class="st-fill" x="56" y="444" width="941" height="111"/>';
  rows.forEach(function (y) { g += line('grid-h', 56, y, 997, y); });
  verticals.forEach(function (x) { g += line('grid-v', x, 44, x, 594); });
  g += line('st-grid', 56, 481.5, 997, 481.5) + line('st-grid', 56, 518.5, 997, 518.5);
  g += line('st-dash', 56, 444.5, 997, 444.5) + line('st-dash', 56, 555.5, 997, 555.5);
  GRID.innerHTML = g;

  function cx(i) { return 58 + 5.995 * i; }
  var m = '<g clip-path="url(#clip-main)">';
  volumes.forEach(function (v, i) {
    var top = 110 + parseInt(v.slice(1), 10) / 3;
    m += rect(v[0] === 'r' ? 'vol-r' : 'vol-g', Math.round(cx(i) - 2.5), top, 5, 409 - top);
  });
  m += '<polygon class="band-fill" points="' + pts(upper.concat(lower.slice().reverse())) + '"/>';
  m += '<polyline class="mid" points="' + pts(middle) + '"/>';
  m += '<polyline class="band" points="' + pts(upper) + '"/>';
  m += '<polyline class="band" points="' + pts(lower) + '"/>';
  m += line('last-line', 56, 322.5, 997, 322.5);
  candles.forEach(function (c, i) {
    var kind = c[0];
    var n = c.slice(1).split(',').map(function (s) { return 110 + Number(s) / 3; });
    var x = Math.round(cx(i) - 2.5);
    m += rect('wick-' + kind, x + 2, n[2], 1, n[3] - n[2]);
    m += rect('can-' + kind, x, n[0], 5, n[1] - n[0]);
  });
  m += '</g><g clip-path="url(#clip-stoch)">';
  m += '<polyline class="st-orange" points="' + pts(orange) + '"/>';
  m += '<polyline class="st-blue" points="' + pts(blue) + '"/></g>';
  SVG.innerHTML = m;

  var ticks = '';
  [56, 112, 168, 224, 280, 336, 392, 482, 519, 556].forEach(function (y) { ticks += 'M997 ' + (y - 0.5) + 'h4'; });
  verticals.slice(0, 10).forEach(function (x) { ticks += 'M' + x + ' 594v4'; });
  document.getElementById('ticks').setAttribute('d', ticks);
})();
```
